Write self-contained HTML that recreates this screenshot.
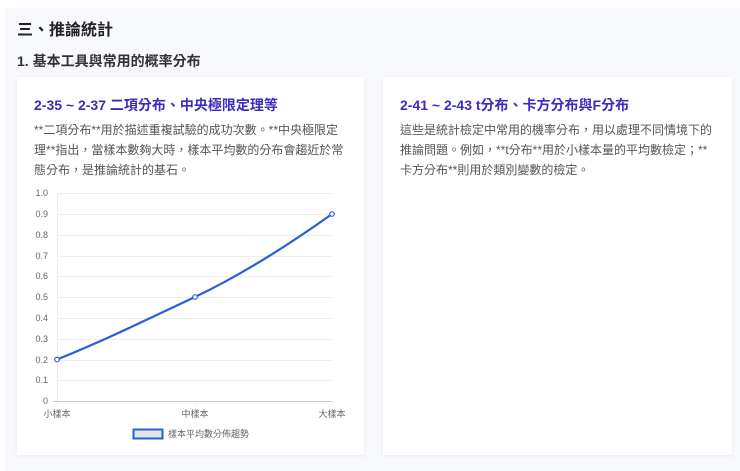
<!DOCTYPE html>
<html><head><meta charset="utf-8"><style>
*{margin:0;padding:0;box-sizing:border-box}
body{width:740px;height:471px;background:#fff;font-family:"Liberation Sans","Noto Sans CJK TC",sans-serif;overflow:hidden;position:relative}
.wrap{position:absolute;left:5px;top:8px;width:735px;height:463px;background:#f7f9fc}
h2{position:absolute;left:17px;top:16px;font-size:16px;font-weight:bold;color:#222}
h3{position:absolute;left:17px;top:51px;font-size:14px;font-weight:bold;color:#333}
.card{position:absolute;top:77px;background:#fff;height:378px;box-shadow:0 1px 4px rgba(0,0,0,0.06)}
.card h4{position:absolute;left:17px;top:18px;font-size:14px;font-weight:bold;color:#3b2cbf;white-space:nowrap}
.card p{position:absolute;left:17px;top:43px;font-size:12px;line-height:20px;color:#555;width:318px}
</style></head><body>
<div class="wrap"></div>
<h2>三、推論統計</h2>
<h3>1. 基本工具與常用的概率分布</h3>
<div class="card" style="left:17px;width:347px">
<h4>2-35 ~ 2-37 二項分布、中央極限定理等</h4>
<p style="width:310px">**二項分布**用於描述重複試驗的成功次數。**中央極限定理**指出，當樣本數夠大時，樣本平均數的分布會趨近於常態分布，是推論統計的基石。</p>
</div>
<div class="card" style="left:383px;width:349px">
<h4>2-41 ~ 2-43 t分布、卡方分布與F分布</h4>
<p>這些是統計檢定中常用的機率分布，用以處理不同情境下的推論問題。例如，**t分布**用於小樣本量的平均數檢定；**卡方分布**則用於類別變數的檢定。</p>
</div>
<svg style="position:absolute;left:0;top:0" width="740" height="471" font-family="Liberation Sans, Noto Sans CJK TC, sans-serif" font-size="9" fill="#666">
<g stroke="#eee" stroke-width="1">
<line x1="57" x2="332" y1="193.5" y2="193.5"/><line x1="57" x2="332" y1="214.5" y2="214.5"/><line x1="57" x2="332" y1="235.5" y2="235.5"/><line x1="57" x2="332" y1="256.5" y2="256.5"/><line x1="57" x2="332" y1="276.5" y2="276.5"/><line x1="57" x2="332" y1="297.5" y2="297.5"/><line x1="57" x2="332" y1="318.5" y2="318.5"/><line x1="57" x2="332" y1="339.5" y2="339.5"/><line x1="57" x2="332" y1="360.5" y2="360.5"/><line x1="57" x2="332" y1="380.5" y2="380.5"/>
<line x1="57.5" x2="57.5" y1="193" y2="405"/><line x1="195.5" x2="195.5" y1="401" y2="405"/><line x1="332.5" x2="332.5" y1="401" y2="405"/>
</g>
<line x1="53" x2="332" y1="401.5" y2="401.5" stroke="#ccc"/>
<g text-anchor="end">
<text x="48" y="196">1.0</text><text x="48" y="217">0.9</text><text x="48" y="238">0.8</text><text x="48" y="259">0.7</text><text x="48" y="279">0.6</text><text x="48" y="300">0.5</text><text x="48" y="321">0.4</text><text x="48" y="342">0.3</text><text x="48" y="363">0.2</text><text x="48" y="383">0.1</text><text x="48" y="404">0</text>
</g>
<g text-anchor="middle"><text x="57" y="417">小樣本</text><text x="195" y="417">中樣本</text><text x="332" y="417">大樣本</text></g>
<path d="M57 359.5 C110 338 150 318 195 297 C245 273 290 244 332 214" fill="none" stroke="#2560d8" stroke-width="2.2"/>
<g fill="#fff" stroke="#2560d8" stroke-width="1.2"><circle cx="57" cy="359.5" r="2.3"/><circle cx="195" cy="297" r="2.3"/><circle cx="332" cy="214" r="2.3"/></g>
<rect x="133.5" y="429.5" width="29" height="9" fill="#e5e5e5" stroke="#2560d8" stroke-width="2"/>
<text x="168" y="437">樣本平均數分佈趨勢</text>
</svg>
</body></html>
